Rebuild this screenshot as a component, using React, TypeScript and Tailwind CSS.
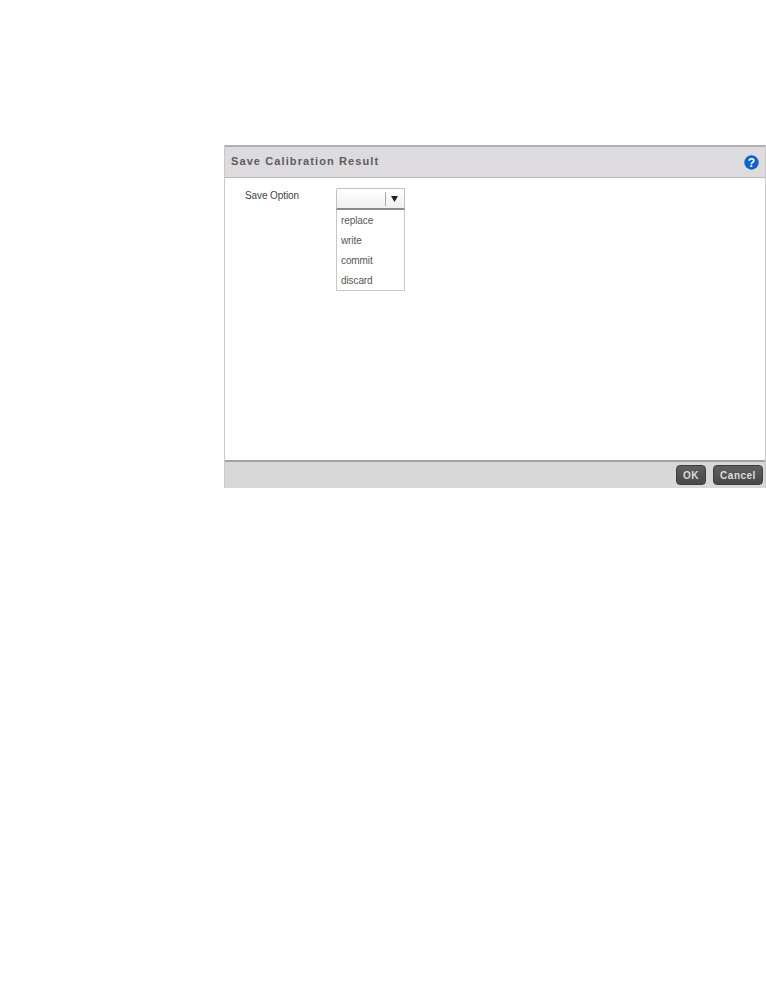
export default function App() {
  return (
    <div className="w-[766px] h-[1008px] bg-white pt-[145px] pl-[224px] font-['Liberation_Sans',sans-serif]">
      <div className="w-[542px] h-[343px] flex flex-col border-l border-[#c9c9c9] border-r border-r-[#c9c9c9]">
        <div className="h-[33px] shrink-0 bg-[#dddbdd] border-t-2 border-t-[#b0b0b6] border-b border-b-[#b9b9bc] flex items-center justify-between pl-[6px] pr-[6px]">
          <span className="text-[11px] font-bold tracking-[1.1px] text-[#5c5c62] -mt-px">Save Calibration Result</span>
          <svg width="15" height="15" viewBox="0 0 15 15" className="mt-[1px]">
            <circle cx="7.5" cy="7.5" r="7.2" fill="#0f62c8" />
            <text x="7.5" y="11.6" textAnchor="middle" fontSize="12" fontWeight="bold" fill="#fff" fontFamily="Liberation Sans">?</text>
          </svg>
        </div>
        <div className="flex-1 flex items-start pt-[10px] pl-[20px]">
          <span className="w-[91px] text-[10px] leading-[14px] tracking-[-0.1px] text-[#444] mt-px">Save Option</span>
          <div className="w-[69px] flex flex-col">
            <div className="h-[22px] border border-[#c0c0c0] border-b-2 border-b-[#8a8a8a] rounded-t-[2px] bg-gradient-to-b from-white to-[#f0f0f0] flex items-center justify-end">
              <span className="h-[14px] border-l border-[#aaa] w-[19px] flex items-center justify-center pr-[2px]">
                <svg width="7" height="6" viewBox="0 0 7 6"><path d="M0 0h7L3.5 6z" fill="#222" /></svg>
              </span>
            </div>
            <div className="h-[81px] border border-t-0 border-[#c8c8c8] flex flex-col text-[10px] tracking-[-0.1px] text-[#555] pl-[4px] pt-px">
              <span className="h-5 leading-5">replace</span>
              <span className="h-5 leading-5">write</span>
              <span className="h-5 leading-5">commit</span>
              <span className="h-5 leading-5">discard</span>
            </div>
          </div>
        </div>
        <div className="h-[28px] shrink-0 bg-[#d8d8d8] border-t-2 border-t-[#a3a3a3] flex items-center justify-end gap-[7px] pr-[2px]">
          <button className="w-[30px] h-[20px] rounded-[4px] border border-[#3c3c3c] bg-gradient-to-b from-[#5f5f5f] to-[#484848] text-[10px] font-bold tracking-[0.5px] text-[#dcdcdc]">OK</button>
          <button className="w-[50px] h-[20px] rounded-[4px] border border-[#3c3c3c] bg-gradient-to-b from-[#5f5f5f] to-[#484848] text-[10px] font-bold tracking-[0.5px] text-[#dcdcdc]">Cancel</button>
        </div>
      </div>
    </div>
  );
}
